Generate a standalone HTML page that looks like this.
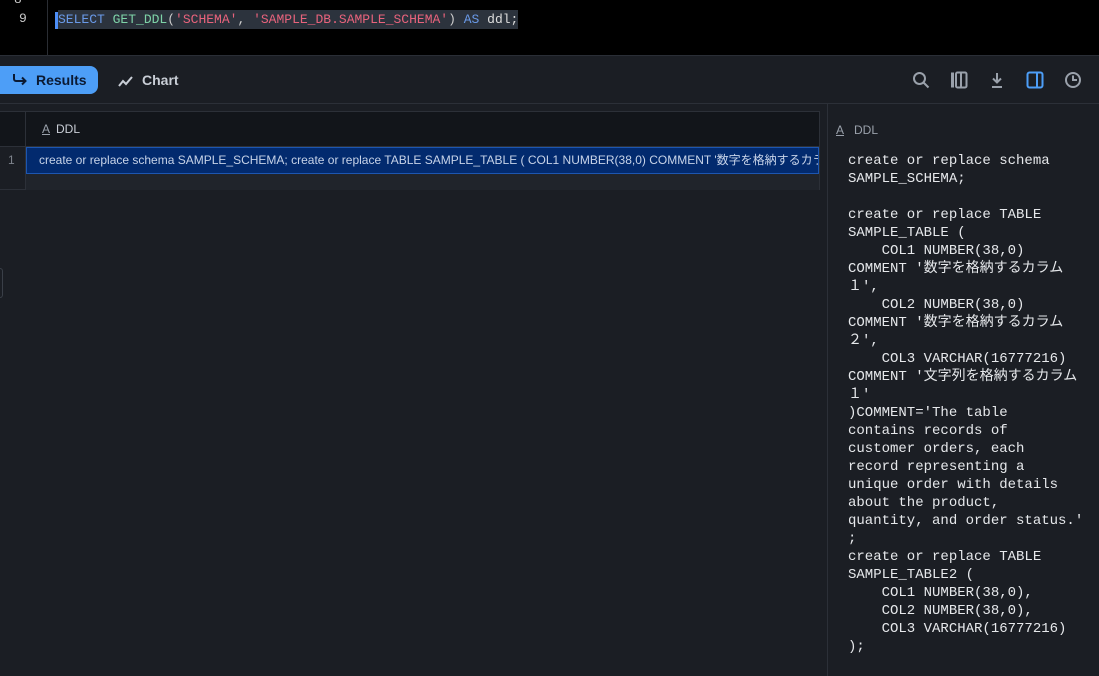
<!DOCTYPE html>
<html><head><meta charset="utf-8"><style>
*{margin:0;padding:0;box-sizing:border-box}
body{width:1099px;height:676px;overflow:hidden;background:#1b1e24;font-family:"Liberation Sans","Noto Sans CJK JP",sans-serif;position:relative;color:#c9ced6}
.ed{position:absolute;left:0;top:0;width:1099px;height:56px;background:#000;border-bottom:1px solid #2a2e36}
.gut{position:absolute;left:47px;top:0;width:1px;height:56px;background:#2a2d33}
.ln{position:absolute;left:14px;font:13px "Liberation Mono",monospace;color:#c8c8c8}
.code{position:absolute;left:58px;top:11px;font:13px/18px "Liberation Mono",monospace;white-space:pre}
.tb{position:absolute;left:0;top:57px;width:1099px;height:47px;border-bottom:1px solid #2c3038}
.btn{position:absolute;left:0;top:9px;width:98px;height:28px;background:#4d9ef7;border-radius:0 8px 8px 0;color:#0b1a33;font-weight:bold;font-size:14px;line-height:28px;padding-left:36px}
.chart{position:absolute;left:118px;top:9px;height:28px;line-height:28px;font-size:14px;font-weight:bold;color:#c9ced6}
.grid{position:absolute;left:0;top:111px;width:820px;height:79px;border:1px solid #2c3038;border-left:none}
.hd{height:35px;background:#12151a;border-bottom:1px solid #2c3038;position:relative}
.rn{position:absolute;left:0;width:26px;border-right:1px solid #2c3038}
.row{position:absolute;left:26px;top:35px;right:0;height:27px;background:#022a6e;border:1px solid #1d56b0;color:#c7d3e8;font-size:12px;line-height:25px;padding-left:12px;white-space:nowrap;overflow:hidden}
.rp{position:absolute;left:827px;top:104px;width:272px;height:572px;border-left:1px solid #2c3038}
.ddl{position:absolute;left:20px;top:48px;font:14px/18px "Liberation Mono","Noto Sans CJK JP",monospace;color:#e6e8eb;white-space:pre}
.ic{position:absolute;top:14px}
</style></head><body>
<div class="ed"><div class="gut"></div>
<div class="ln" style="top:-8px">8</div><div class="ln" style="top:11px;left:19px">9</div>
<div style="position:absolute;left:55px;top:12px;width:3px;height:17px;background:#4d8ef7"></div>
<div class="code"><span style="background:#2c333d;padding:2px 0"><span style="color:#6a9ae8">SELECT</span> <span style="color:#7ed3a8">GET_DDL</span><span style="color:#ccc">(</span><span style="color:#e8637c">'SCHEMA'</span><span style="color:#ccc">, </span><span style="color:#e8637c">'SAMPLE_DB.SAMPLE_SCHEMA'</span><span style="color:#ccc">) </span><span style="color:#6a9ae8">AS</span> <span style="color:#ddd">ddl;</span></span></div>
</div>
<div class="tb">
<div class="btn"><svg style="position:absolute;left:12px;top:7px" width="16" height="14" viewBox="0 0 16 14"><path d="M2 1v5a2 2 0 0 0 2 2h9M10 4.5l3.5 3.5-3.5 3.5" fill="none" stroke="#0b1a33" stroke-width="2"/></svg>Results</div>
<div class="chart"><svg style="vertical-align:-2px;margin-right:8px" width="16" height="12" viewBox="0 0 16 12"><path d="M1 11l4-5 3 3 6-7" fill="none" stroke="#c9ced6" stroke-width="2"/></svg>Chart</div>
<svg class="ic" style="left:912px" width="18" height="18" viewBox="0 0 18 18"><circle cx="7.5" cy="7.5" r="5.5" fill="none" stroke="#9aa1ab" stroke-width="2"/><path d="M11.5 11.5l5 5" stroke="#9aa1ab" stroke-width="2"/></svg>
<svg class="ic" style="left:950px" width="18" height="18" viewBox="0 0 18 18"><rect x="1" y="1.5" width="3" height="15" fill="#9aa1ab"/><rect x="6" y="1.5" width="10.5" height="15" rx="1.5" fill="none" stroke="#9aa1ab" stroke-width="2"/><path d="M11 2v14" stroke="#9aa1ab" stroke-width="2"/></svg>
<svg class="ic" style="left:988px" width="18" height="18" viewBox="0 0 18 18"><path d="M9 2v9M5 7.5l4 4 4-4M4 16h10" fill="none" stroke="#9aa1ab" stroke-width="2"/></svg>
<svg class="ic" style="left:1026px" width="18" height="18" viewBox="0 0 18 18"><rect x="1.5" y="1.5" width="15" height="15" rx="2" fill="none" stroke="#4d9ef7" stroke-width="2"/><path d="M11 2v14" stroke="#4d9ef7" stroke-width="2"/></svg>
<svg class="ic" style="left:1064px" width="18" height="18" viewBox="0 0 18 18"><circle cx="9" cy="9" r="7" fill="none" stroke="#9aa1ab" stroke-width="2"/><path d="M9 4.5V9h4" fill="none" stroke="#9aa1ab" stroke-width="2"/></svg>
</div>
<div class="grid">
<div class="hd"><div class="rn" style="top:0;height:35px"></div>
<div style="position:absolute;left:42px;top:10px;font-size:12px;color:#c9ced6"><span style="text-decoration:underline;color:#9aa1ab;margin-right:6px">A</span>DDL</div></div>
<div class="rn" style="top:35px;height:43px"></div>
<div style="position:absolute;left:8px;top:41px;font-size:12px;color:#7d838c">1</div>
<div class="row">create or replace schema SAMPLE_SCHEMA; create or replace TABLE SAMPLE_TABLE ( COL1 NUMBER(38,0) COMMENT '数字を格納するカラム１', COL2</div>
<div style="position:absolute;left:26px;top:62px;right:0;height:16px;background:#20242b"></div>
</div>
<div style="position:absolute;left:0;top:268px;width:3px;height:30px;border:1px solid #3a3f48;border-left:none;border-radius:0 3px 3px 0"></div>
<div class="rp">
<div style="position:absolute;left:8px;top:19px;font-size:12px;color:#9aa1ab"><span style="text-decoration:underline;margin-right:10px">A</span>DDL</div>
<div class="ddl">create or replace schema
SAMPLE_SCHEMA;

create or replace TABLE
SAMPLE_TABLE (
    COL1 NUMBER(38,0)
COMMENT '数字を格納するカラム
１',
    COL2 NUMBER(38,0)
COMMENT '数字を格納するカラム
２',
    COL3 VARCHAR(16777216)
COMMENT '文字列を格納するカラム
１'
)COMMENT='The table
contains records of
customer orders, each
record representing a
unique order with details
about the product,
quantity, and order status.'
;
create or replace TABLE
SAMPLE_TABLE2 (
    COL1 NUMBER(38,0),
    COL2 NUMBER(38,0),
    COL3 VARCHAR(16777216)
);</div>
</div>
</body></html>
